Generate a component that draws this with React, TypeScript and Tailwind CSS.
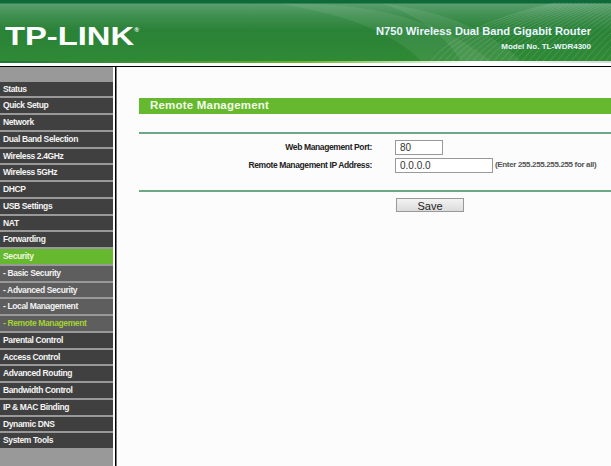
const menu = [
  { label: 'Status' },
  { label: 'Quick Setup' },
  { label: 'Network' },
  { label: 'Dual Band Selection' },
  { label: 'Wireless 2.4GHz' },
  { label: 'Wireless 5GHz' },
  { label: 'DHCP' },
  { label: 'USB Settings' },
  { label: 'NAT' },
  { label: 'Forwarding' },
  { label: 'Security', kind: 'active' },
  { label: '- Basic Security', kind: 'sub' },
  { label: '- Advanced Security', kind: 'sub' },
  { label: '- Local Management', kind: 'sub' },
  { label: '- Remote Management', kind: 'current' },
  { label: 'Parental Control' },
  { label: 'Access Control' },
  { label: 'Advanced Routing' },
  { label: 'Bandwidth Control' },
  { label: 'IP & MAC Binding' },
  { label: 'Dynamic DNS' },
  { label: 'System Tools' },
];

function HeaderWaves() {
  const lines = Array.from({ length: 26 }, (_, i) => i);
  return (
    <svg className="absolute right-0 top-0 h-[61px] w-[330px]" viewBox="0 0 330 61" fill="none">
      <path d="M0 4 C70 2 150 12 210 61 L140 61 C110 30 60 14 0 4Z" fill="#ffffff" fillOpacity="0.07" />
      <path d="M100 3 C150 20 170 45 180 61 L240 61 C215 35 170 12 100 3Z" fill="#ffffff" fillOpacity="0.08" />
      {lines.map((i) => (
        <path
          key={i}
          d={`M${150 + i * 7} 61 C${170 + i * 7} 35 ${220 + i * 6} 15 ${275 + i * 4} 3`}
          stroke="#ffffff"
          strokeOpacity="0.13"
          strokeWidth="1"
        />
      ))}
    </svg>
  );
}

export default function App() {
  return (
    <div className="flex h-[466px] w-[611px] flex-col overflow-hidden bg-white font-['Liberation_Sans',Arial,sans-serif]">
      <header className="relative h-[61px] shrink-0 overflow-hidden bg-[linear-gradient(#0f6a3a_0px,#0f6a3a_3px,#5a9e6e_4px,#3f8f50_16px,#2a8237_30px,#2f8a35_61px)]">
        <HeaderWaves />
        <div className="absolute left-[5px] top-[22px] flex origin-left scale-x-[1.31] items-start text-[25px] font-bold leading-[29px] text-white">
          TP-LINK
          <span className="mt-[6px] text-[5px] leading-[5px] text-white">®</span>
        </div>
        <div className="relative flex flex-col items-end pr-[20px] pt-[24px] font-bold text-[#eaf6ff]">
          <div className="text-[11.2px] leading-[14px]">N750 Wireless Dual Band Gigabit Router</div>
          <div className="mt-[3px] text-[8px] leading-[12px]">Model No. TL-WDR4300</div>
        </div>
      </header>
      <div className="h-[2px] shrink-0 bg-[linear-gradient(90deg,#1a7538,#6cb82e_50%,#ffffff_78%,#d8d8d8)]" />
      <div className="h-[3px] shrink-0 bg-white" />
      <div className="h-px shrink-0 bg-black" />
      <div className="flex min-h-0 flex-1">
        <nav className="flex w-[113px] shrink-0 flex-col gap-[2px] bg-[#999999] pt-[14.5px]">
          {menu.map((item) => (
            <div
              key={item.label}
              className={
                'flex h-[14.76px] items-center whitespace-nowrap pl-[3px] text-[8.5px] font-bold tracking-[-0.38px] ' +
                (item.kind === 'active'
                  ? 'bg-[#66b82e] text-[#eef7e0]'
                  : item.kind === 'sub'
                    ? 'bg-[#5e5e5e] text-[#f2f2f2]'
                    : item.kind === 'current'
                      ? 'bg-[#5e5e5e] text-[#a4d233]'
                      : 'bg-[#404040] text-[#f4f4f4]')
              }
            >
              {item.label}
            </div>
          ))}
        </nav>
        <div className="w-[2px] shrink-0 bg-white" />
        <div className="w-px shrink-0 bg-black" />
        <div className="w-px shrink-0 bg-[#777777]" />
        <main className="min-w-0 flex-1 bg-[#fcfcfc] pt-[31px]">
          <div className="ml-[22px] flex h-[16px] items-center bg-[#66b82e] pl-[11px] text-[11.5px] font-bold tracking-[0.2px] text-[#f4fbe8]">
            Remote Management
          </div>
          <div className="ml-[22px] mt-[18px] h-[2px] bg-[#6aa886]" />
          <div className="mt-[4px] flex h-[18px] items-center">
            <div className="w-[255px] text-right text-[8.5px] font-bold tracking-[-0.38px] text-[#222222]">Web Management Port:</div>
            <div className="ml-[23px] flex h-[15px] w-[48px] items-center border border-[#999999] bg-white pl-[4px] text-[10px] text-[#333333]">
              80
            </div>
          </div>
          <div className="flex h-[18px] items-center">
            <div className="w-[255px] text-right text-[8.5px] font-bold tracking-[-0.38px] text-[#222222]">Remote Management IP Address:</div>
            <div className="ml-[23px] flex h-[15px] w-[98px] items-center border border-[#999999] bg-white pl-[4px] text-[10px] text-[#333333]">
              0.0.0.0
            </div>
            <div className="ml-[2px] whitespace-nowrap text-[8px] font-bold tracking-[-0.35px] text-[#555555]">(Enter 255.255.255.255 for all)</div>
          </div>
          <div className="ml-[22px] mt-[16px] h-[2px] bg-[#6aa886]" />
          <div className="ml-[279px] mt-[6px] h-[14px] w-[68px] overflow-hidden border border-[#999999] bg-[linear-gradient(#f2f2f2,#dcdcdc)] pt-[2px] text-center text-[11px] leading-[11px] text-[#222222]">
            Save
          </div>
        </main>
      </div>
    </div>
  );
}
